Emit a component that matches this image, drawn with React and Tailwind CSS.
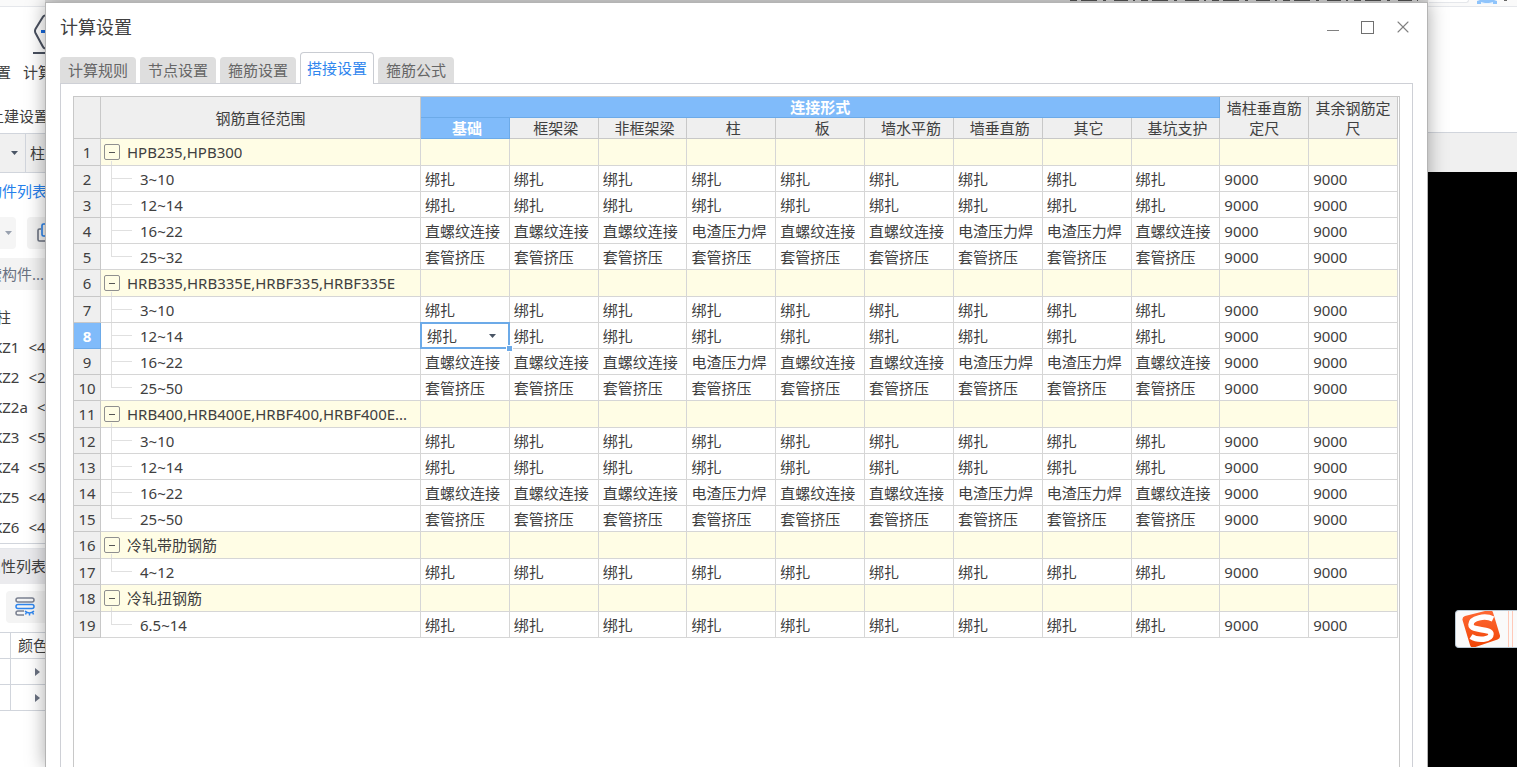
import { useState } from "react";
import { X } from "lucide-react";

const TABS = ["计算规则", "节点设置", "箍筋设置", "搭接设置", "箍筋公式"];
const FORMS = ["基础", "框架梁", "非框架梁", "柱", "板", "墙水平筋", "墙垂直筋", "其它", "基坑支护"];

const tie = Array(9).fill("绑扎");
const sleeve = Array(9).fill("套管挤压");
const thread = FORMS.map((name) =>
  ["柱", "墙垂直筋", "其它"].includes(name) ? "电渣压力焊" : "直螺纹连接"
);

const GROUPS = [
  { name: "HPB235,HPB300", items: [["3~10", tie], ["12~14", tie], ["16~22", thread], ["25~32", sleeve]] },
  { name: "HRB335,HRB335E,HRBF335,HRBF335E", items: [["3~10", tie], ["12~14", tie], ["16~22", thread], ["25~50", sleeve]] },
  { name: "HRB400,HRB400E,HRBF400,HRBF400E...", items: [["3~10", tie], ["12~14", tie], ["16~22", thread], ["25~50", sleeve]] },
  { name: "冷轧带肋钢筋", items: [["4~12", tie]] },
  { name: "冷轧扭钢筋", items: [["6.5~14", tie]] },
];

// Flatten groups into numbered table rows
const ROWS = GROUPS.flatMap((g) => [
  { group: true, name: g.name },
  ...g.items.map(([name, values], i) => ({ name, values, last: i === g.items.length - 1 })),
]).map((row, i) => ({ ...row, no: i + 1 }));

const COMPONENTS = ["KZ1 <4", "KZ2 <2", "KZ2a <", "KZ3 <5", "KZ4 <5", "KZ5 <4", "KZ6 <4"];

function Caret({ className = "" }) {
  return (
    <svg className={`h-1 w-[7px] ${className}`} viewBox="0 0 7 4" fill="currentColor">
      <path d="M0 0h7L3.5 4z" />
    </svg>
  );
}

// Part of the main window that stays visible left of the dialog
function LeftStrip() {
  return (
    <aside className="w-[45px] shrink-0 overflow-hidden whitespace-nowrap bg-white">
      <div className="h-[7px] border-b border-gray-200 bg-[#fafafa]" />
      <div className="flex h-[51px] justify-end pt-[7px]">
        <svg className="h-10 w-3 shrink-0" viewBox="0 0 12 40" fill="none">
          <path d="M12 1.500q-1.500 0-2.500 2L2.500 15q-1 2 0 4L9.500 32q1 2 2.500 2.500" stroke="#4a5160" strokeWidth="2" />
          <path d="M8 17.500h4" stroke="#1668dc" strokeWidth="3" />
          <path d="M0 39h12" stroke="#4a5160" strokeWidth="2" />
        </svg>
      </div>
      <div className="-ml-1 flex h-7 items-center gap-3">
        <span>置</span>
        <span>计算</span>
      </div>
      <div className="-ml-[11px] flex h-[47px] items-end pb-[6px]">土建设置</div>
      <div className="flex h-10 border-y border-gray-300 bg-[#f0f0f0]">
        <div className="flex w-[26px] shrink-0 items-center justify-end border-r border-gray-300 pr-[7px]">
          <Caret className="text-gray-600" />
        </div>
        <span className="flex items-center pl-1">柱</span>
      </div>
      <div className="-ml-[13px] flex h-9 items-center text-[#2680eb]">构件列表</div>
      <div className="mt-2 flex h-8 gap-[11px]">
        <div className="flex w-4 shrink-0 items-center justify-center rounded-r bg-[#f5f5f5]">
          <Caret className="text-gray-400" />
        </div>
        <div className="flex flex-1 items-center justify-end rounded-l bg-[#f2f2f2]">
          <svg className="h-5 w-2" viewBox="0 0 8 20" fill="none" strokeWidth="1.6">
            <path d="M4 6H2.500q-1.500 0-1.500 1.500v9q0 1.500 1.500 1.500H8" stroke="#6b7280" />
            <path d="M8 1H6.500Q5 1 5 2.500v9q0 1.500 1.500 1.500H8" stroke="#2680eb" />
          </svg>
        </div>
      </div>
      <div className="mt-[9px] flex h-8 items-center justify-end bg-[#f3f3f3] pr-px text-gray-500">
        搜索构件...
      </div>
      <div className="-ml-1 mt-3 flex h-[30px] items-center">柱</div>
      <ul className="-ml-[7px]">
        {COMPONENTS.map((name) => {
          const [code, count] = name.split(" ");
          return (
            <li key={name} className="flex h-[30px] items-center gap-[9px]">
              <span>{code}</span>
              <span>{count}</span>
            </li>
          );
        })}
      </ul>
      <div className="mt-px border-t border-gray-300 pt-1">
        <div className="-ml-[14px] flex h-9 items-center border-t border-gray-200 bg-[#ebebee]">属性列表</div>
      </div>
      <div className="ml-[6px] mt-[7px] flex h-8 items-center rounded-l bg-[#f4f4f4] pl-[9px]">
        <svg className="h-5 w-5 shrink-0" viewBox="0 0 20 20" fill="none" strokeWidth="1.500">
          <rect x="1" y="1" width="18" height="4" rx="2" stroke="#7a8090" />
          <rect x="1" y="7.500" width="18" height="4" rx="2" stroke="#2f86ee" />
          <path d="M9 14H3q-2 0-2 2t2 2h6" stroke="#7a8090" />
          <path d="M10 14q4.500 4 9 0M11.500 15l-1 2.500M14.500 16v2.500M17.500 15l1 2.500" stroke="#2f86ee" />
        </svg>
      </div>
      <div className="mt-[9px] border-t border-gray-300">
        {["颜色", "", ""].map((label, i) => (
          <div key={i} className="flex h-[26px] border-b border-gray-300">
            <div className="w-[11px] shrink-0 border-r border-gray-300" />
            {label ? (
              <span className="flex items-center pl-[7px]">{label}</span>
            ) : (
              <span className="flex flex-1 items-center justify-end pr-[5px]">
                <svg className="h-2 w-[5px] text-gray-500" viewBox="0 0 5 8" fill="currentColor">
                  <path d="M0 0v8l5-4z" />
                </svg>
              </span>
            )}
          </div>
        ))}
      </div>
    </aside>
  );
}

function RightStrip() {
  return (
    <aside className="flex w-[89px] shrink-0 flex-col bg-black">
      <div className="h-[133px] border-b border-gray-300 bg-white">
        <div className="flex h-[7px] justify-end border-b border-gray-200 bg-[#fafafa]">
          <div className="mr-2 h-[3px] w-10 rounded-br border-b border-r border-gray-200 bg-white" />
          <svg className="h-1 w-10" viewBox="0 0 40 4">
            <path d="M0 4V1l3-1h14l3 1v3z" fill="#8fc4fb" />
            <path d="M4 4V2l4 1h4l4-1v2z" fill="#eaf4ff" />
            <path d="M27 0h3v1h-3z" fill="#666" />
          </svg>
        </div>
      </div>
      <div className="h-[39px] bg-[#f0f0f0]" />
      <div className="ml-[27px] mt-[438px] flex h-[38px] items-center overflow-hidden rounded-l border border-r-0 border-[#b9c7d2] bg-[#fafafa]">
        <svg className="ml-[5px] h-[38px] w-10 shrink-0" viewBox="0 0 40 38">
          <defs>
            <linearGradient id="sogou" x1="0" y1="0" x2="0" y2="1">
              <stop offset="0" stopColor="#ff6a35" />
              <stop offset="1" stopColor="#f04405" />
            </linearGradient>
          </defs>
          <path
            d="M4 6 28 0q3-.5 4 2.500l7 23q.5 3-2.500 4L13 37.500q-3 .5-4-2.500L1.500 10q-.5-3 2.500-4Z"
            fill="url(#sogou)"
          />
          <path
            d="M32 9C24 5 10 8 10 14.500c0 7 20 3.500 20 9.500 0 6-13 7-20 2.500"
            fill="none"
            stroke="#fff"
            strokeWidth="5.500"
          />
        </svg>
        <div className="ml-[7px] h-full w-[5px] shrink-0 border-x border-[#ffc9b8]" />
      </div>
    </aside>
  );
}

function NameCell({ row }) {
  if (row.group) {
    return (
      <div className="relative flex h-[26px] items-center pl-[3px]">
        <span className="absolute bottom-0 left-[10px] h-1 w-px bg-[#e0e0e0]" />
        <button
          type="button"
          aria-label={`折叠 ${row.name}`}
          className="flex h-4 w-4 shrink-0 items-center justify-center rounded-xs border border-[#8f8f8f]"
        >
          <span className="h-px w-[6px] bg-[#555]" />
        </button>
        <span className="ml-[7px] truncate">{row.name}</span>
      </div>
    );
  }
  return (
    <div className="flex h-[25px] items-center">
      <span className="flex h-full w-[31px] shrink-0 flex-col pl-[10px]">
        <span className="h-[13px] border-b border-l border-[#e0e0e0]" />
        {!row.last && <span className="flex-1 border-l border-[#e0e0e0]" />}
      </span>
      <span className="ml-2">{row.name}</span>
    </div>
  );
}

function LapTable() {
  const [lap, setLap] = useState("绑扎");
  const head = "border-b border-r border-[#c8c8c8] bg-[#efefef] p-0 font-normal";
  const cell = "border-b border-r border-[#d6d6d6] p-0";
  const active = "border-b border-r border-[#6caae8] bg-[#80bbfa] p-0 font-bold text-white";

  return (
    <table className="w-full table-fixed border-separate border-spacing-0 leading-5">
      <colgroup>
        <col className="w-[27px]" />
        <col className="w-80" />
        {Array.from({ length: 11 }, (_, i) => (
          <col key={i} />
        ))}
      </colgroup>
      <thead>
        <tr className="h-[21px]">
          <th rowSpan={2} className={head} aria-label="序号" />
          <th rowSpan={2} className={head}>钢筋直径范围</th>
          <th colSpan={9} className={active}>连接形式</th>
          <th rowSpan={2} className={`${head} px-1`}>墙柱垂直筋定尺</th>
          <th rowSpan={2} className={`${head} px-1`}>其余钢筋定尺</th>
        </tr>
        <tr className="h-[21px]">
          {FORMS.map((name, i) => (
            <th key={name} className={i === 0 ? active : head}>
              <span className="pl-1">{name}</span>
            </th>
          ))}
        </tr>
      </thead>
      <tbody>
        {ROWS.map((row) => (
          <tr key={row.no} className={row.group ? "h-[27px] bg-[#fffde5]" : "h-[26px]"}>
            <th scope="row" className={row.no === 8 ? active : head}>{row.no}</th>
            <td className={cell}>
              <NameCell row={row} />
            </td>
            {FORMS.map((form, i) =>
              row.no === 8 && i === 0 ? (
                <td key={form} className={`${cell} relative`}>
                  <div className="absolute -inset-px flex items-center border-2 border-[#6caae8] bg-white">
                    <select
                      aria-label="12~14 基础"
                      value={lap}
                      onChange={(e) => setLap(e.target.value)}
                      className="h-full w-full appearance-none bg-transparent pl-[5px] outline-none"
                    >
                      <option>绑扎</option>
                      <option>直螺纹连接</option>
                      <option>电渣压力焊</option>
                      <option>套管挤压</option>
                    </select>
                    <Caret className="pointer-events-none absolute right-3 text-gray-600" />
                    <span className="absolute -bottom-1 -right-1 h-[5px] w-[5px] bg-[#6caae8] outline outline-white" />
                  </div>
                </td>
              ) : (
                <td key={form} className={`${cell} whitespace-nowrap pl-1`}>{row.values?.[i]}</td>
              )
            )}
            <td className={`${cell} pl-1`}>{row.group ? "" : "9000"}</td>
            <td className={`${cell} pl-1`}>{row.group ? "" : "9000"}</td>
          </tr>
        ))}
      </tbody>
    </table>
  );
}

export default function App() {
  const [tab, setTab] = useState("搭接设置");

  return (
    <div className="flex h-screen overflow-hidden bg-[#e4e4e4] font-['Noto_Sans','Noto_Sans_CJK_SC',sans-serif] text-[15px] text-[#404040]">
      <LeftStrip />
      <div className="flex min-w-0 flex-1 flex-col">
        <div className="flex h-[2px] shrink-0 justify-end bg-[#dcdcdc] pr-[10px]">
          <svg className="h-[2px] w-[348px]" viewBox="0 0 348 2">
            <path d="M0 .5h348" stroke="#555" strokeDasharray="7 4 16 6 3 8 14 5 2 6" />
          </svg>
        </div>
        <main className="relative flex flex-1 flex-col border border-b-0 border-[#b4b4b4] bg-white px-[14px] shadow-[0_0_18px_rgba(0,0,0,0.35)]">
          <header className="mb-px flex h-12 shrink-0 items-center justify-between">
            <h1 className="text-[18px]">计算设置</h1>
            <div className="flex items-center gap-[18px] text-[#808080]">
              <button type="button" aria-label="最小化" className="flex h-4 w-4 items-end justify-center pb-1">
                <span className="h-px w-3 bg-[#808080]" />
              </button>
              <button type="button" aria-label="最大化" className="flex h-4 w-4 items-center justify-center">
                <span className="h-[13px] w-[13px] border border-[#707070]" />
              </button>
              <button type="button" aria-label="关闭">
                <X className="h-5 w-5" strokeWidth={1.3} />
              </button>
            </div>
          </header>

          {/* Tabs */}
          <div role="tablist" className="relative z-10 -mb-px flex h-8 shrink-0 items-end gap-1">
            {TABS.map((name) => (
              <button
                key={name}
                type="button"
                role="tab"
                aria-selected={tab === name}
                onClick={() => setTab(name)}
                className={
                  tab === name
                    ? "h-8 rounded-t border border-b-0 border-[#c9ccd2] bg-white px-[6px] text-[#2f86ee]"
                    : "mb-px h-[26px] rounded-t bg-[#dedede] px-2 text-[#666]"
                }
              >
                {name}
              </button>
            ))}
          </div>

          {/* Table panel */}
          <section className="flex flex-1 border border-b-0 border-[#ced0d6] px-3 pt-3">
            <div className="flex-1 border border-b-0 border-[#c8c8c8] pr-px">
              <LapTable />
            </div>
          </section>
        </main>
      </div>
      <RightStrip />
    </div>
  );
}
